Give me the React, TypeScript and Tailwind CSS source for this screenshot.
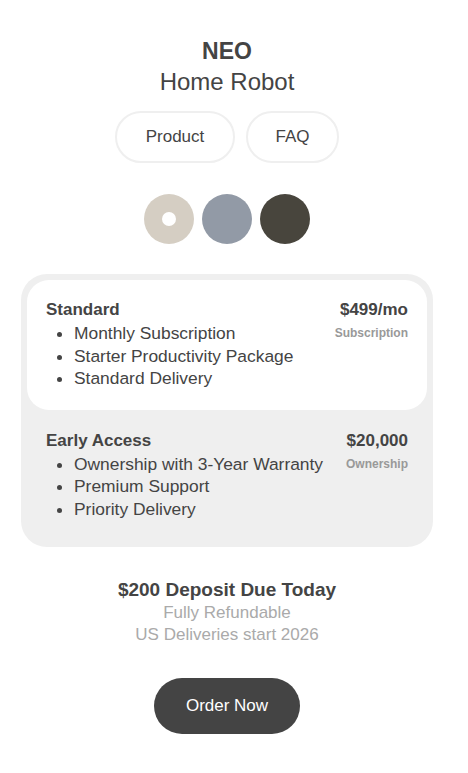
import React from 'react';

const plans = [
  {
    name: 'Standard',
    price: '$499/mo',
    kind: 'Subscription',
    items: ['Monthly Subscription', 'Starter Productivity Package', 'Standard Delivery'],
    selected: true,
  },
  {
    name: 'Early Access',
    price: '$20,000',
    kind: 'Ownership',
    items: ['Ownership with 3-Year Warranty', 'Premium Support', 'Priority Delivery'],
    selected: false,
  },
];

const App: React.FC = () => {
  return (
    <div
      className="min-h-screen bg-white text-[#444444]"
      style={{ fontFamily: '"Liberation Sans", Arial, sans-serif' }}
    >
      <div className="w-[454px] px-[21px] pt-[37px] flex flex-col items-center">
        <h1 className="text-[23px] font-bold leading-[28px]">NEO</h1>
        <h2 className="text-[24px] leading-[30px] mt-[2px]">Home Robot</h2>

        {/* nav pills */}
        <div className="flex gap-[11px] mt-[14px]">
          <button className="h-[52px] w-[120px] rounded-full border-2 border-[#efefef] text-[17px]">
            Product
          </button>
          <button className="h-[52px] w-[93px] rounded-full border-2 border-[#efefef] text-[17px]">
            FAQ
          </button>
        </div>

        {/* colour swatches */}
        <div className="flex gap-[8px] mt-[31px]">
          <div className="w-[50px] h-[50px] rounded-full bg-[#d5cec3] flex items-center justify-center">
            <div className="w-[14px] h-[14px] rounded-full bg-white" />
          </div>
          <div className="w-[50px] h-[50px] rounded-full bg-[#929aa6]" />
          <div className="w-[50px] h-[50px] rounded-full bg-[#48453d]" />
        </div>

        {/* plans */}
        <div className="w-full mt-[30px] bg-[#efefef] rounded-[26px] p-[6px] flex flex-col">
          {plans.map((p) => (
            <div
              key={p.name}
              className={`flex justify-between px-[19px] ${
                p.selected ? 'bg-white rounded-[22px] pt-[19px] pb-[20px]' : 'pt-[20px] pb-[21px]'
              }`}
            >
              <div>
                <div className="text-[17px] font-bold leading-[22px]">{p.name}</div>
                <ul className="list-disc pl-[28px] text-[17.4px] leading-[22.5px] mt-[1px]">
                  {p.items.map((it) => (
                    <li key={it}>{it}</li>
                  ))}
                </ul>
              </div>
              <div className="flex flex-col items-end">
                <div className="text-[17px] font-bold leading-[22px]">{p.price}</div>
                <div className="text-[12px] font-bold text-[#999999] leading-[16px] mt-[4px]">
                  {p.kind}
                </div>
              </div>
            </div>
          ))}
        </div>

        {/* deposit */}
        <div className="mt-[31px] text-center">
          <div className="text-[19px] font-bold leading-[24px]">$200 Deposit Due Today</div>
          <div className="text-[17px] text-[#aaaaaa] leading-[22px]">Fully Refundable</div>
          <div className="text-[17px] text-[#aaaaaa] leading-[22px]">US Deliveries start 2026</div>
        </div>

        <button className="mt-[32px] h-[56px] w-[146px] rounded-full bg-[#444444] text-white text-[17px]">
          Order Now
        </button>
      </div>
    </div>
  );
};

export default App;
